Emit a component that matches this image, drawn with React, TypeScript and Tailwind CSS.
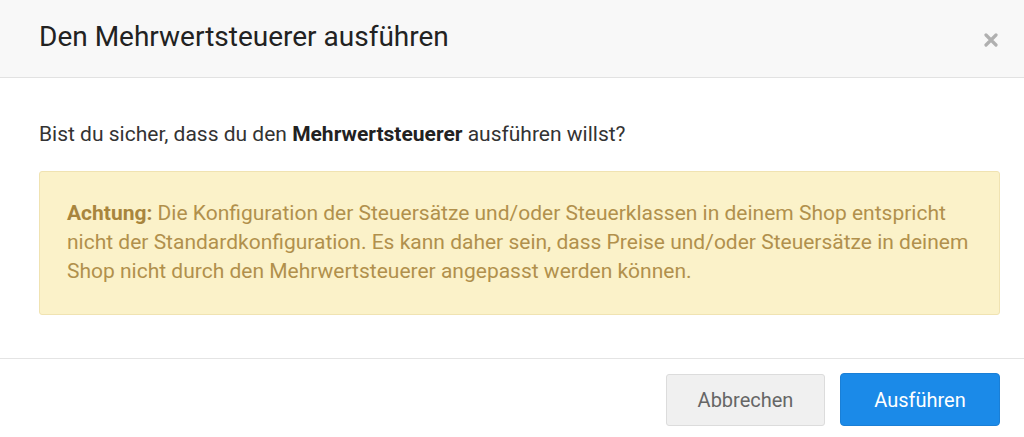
import React from "react";

export default function App() {
  return (
    <div className="w-[1024px] h-[437px] bg-white overflow-hidden flex flex-col" style={{ fontFamily: "Roboto, 'Liberation Sans', sans-serif" }}>
      <div className="h-[78px] bg-[#f8f8f8] border-b border-[#e2e2e2] flex items-center justify-between pl-[39px] pr-[26px] shrink-0">
        <h1 className="text-[28px] text-[#222] leading-none -mt-[4px]">Den Mehrwertsteuerer ausführen</h1>
        <svg width="14" height="14" viewBox="0 0 14 14" className="mt-[2px]">
          <path d="M2 2 L12 12 M12 2 L2 12" stroke="#b0b0b0" strokeWidth="3.2" strokeLinecap="round" />
        </svg>
      </div>
      <div className="pl-[39px] pr-[24px] pt-[44px] h-[281px] shrink-0 border-b border-[#e4e4e4]">
        <p className="text-[21px] text-[#333] leading-[24px]">
          Bist du sicher, dass du den <b className="font-bold text-[#222]">Mehrwertsteuerer</b> ausführen willst?
        </p>
        <div className="mt-[25px] bg-[#fbf2c9] border border-[#f0e3b2] rounded-[3px] pl-[27px] pr-[20px] pt-[27px] pb-[28px] text-[21px] leading-[29px] text-[#b1904c]">
          <b className="font-bold text-[#a8853d]">Achtung:</b> Die Konfiguration der Steuersätze und/oder Steuerklassen in deinem Shop entspricht nicht der Standardkonfiguration. Es kann daher sein, dass Preise und/oder Steuersätze in deinem Shop nicht durch den Mehrwertsteuerer angepasst werden können.
        </div>
      </div>
      <div className="flex-1 flex justify-end items-start gap-[15px] pr-[24px] pt-[15px]">
        <button className="w-[159px] h-[52px] bg-[#f0f0f0] border border-[#dcdcdc] rounded-[3px] text-[20px] text-[#666]">Abbrechen</button>
        <button className="w-[160px] h-[53px] bg-[#1b8ae8] border border-[#1a7fd6] rounded-[4px] text-[20px] text-white -mt-[1px]">Ausführen</button>
      </div>
    </div>
  );
}
